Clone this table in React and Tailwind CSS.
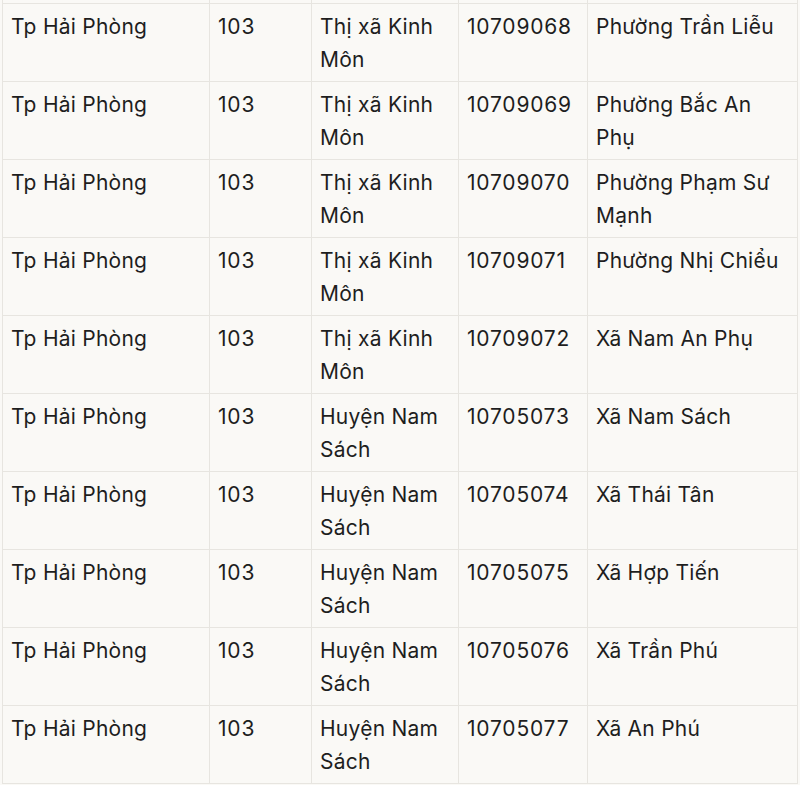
import React from 'react';

const rows = [
  ['Tp Hải Phòng', '103', 'Thị xã Kinh Môn', '10709068', 'Phường Trần Liễu'],
  ['Tp Hải Phòng', '103', 'Thị xã Kinh Môn', '10709069', 'Phường Bắc An Phụ'],
  ['Tp Hải Phòng', '103', 'Thị xã Kinh Môn', '10709070', 'Phường Phạm Sư Mạnh'],
  ['Tp Hải Phòng', '103', 'Thị xã Kinh Môn', '10709071', 'Phường Nhị Chiểu'],
  ['Tp Hải Phòng', '103', 'Thị xã Kinh Môn', '10709072', 'Xã Nam An Phụ'],
  ['Tp Hải Phòng', '103', 'Huyện Nam Sách', '10705073', 'Xã Nam Sách'],
  ['Tp Hải Phòng', '103', 'Huyện Nam Sách', '10705074', 'Xã Thái Tân'],
  ['Tp Hải Phòng', '103', 'Huyện Nam Sách', '10705075', 'Xã Hợp Tiến'],
  ['Tp Hải Phòng', '103', 'Huyện Nam Sách', '10705076', 'Xã Trần Phú'],
  ['Tp Hải Phòng', '103', 'Huyện Nam Sách', '10705077', 'Xã An Phú'],
];

const widths = ['w-[207px]', 'w-[102px]', 'w-[147px]', 'w-[129px]', 'w-[210px]'];

export default function App() {
  return (
    <div className="w-[800px] h-[785px] overflow-hidden bg-[#faf9f6] pl-[2px] font-['Inter',sans-serif] text-[#1e1e1e]">
      <table className="border-collapse table-fixed w-[796px]">
        <colgroup>
          {widths.map((w, i) => (
            <col key={i} className={w} />
          ))}
        </colgroup>
        <tbody>
          {/* tail of the previous row, cut off at the top */}
          <tr className="h-[3px]">
            {widths.map((w, i) => (
              <td key={i} className="border-x border-b border-[#e7e5e0] p-0" />
            ))}
          </tr>
          {rows.map((row, r) => (
            <tr key={r} className="h-[78px]">
              {row.map((cell, c) => (
                <td
                  key={c}
                  className={`border border-[#e7e5e0] align-top px-[8px] pt-[6px] pb-[5px] text-[21px] leading-[33px] ${
                    c === 1 || c === 3 ? 'tracking-[0.8px]' : 'tracking-[0.25px]'
                  }`}
                >
                  {cell}
                </td>
              ))}
            </tr>
          ))}
        </tbody>
      </table>
    </div>
  );
}
